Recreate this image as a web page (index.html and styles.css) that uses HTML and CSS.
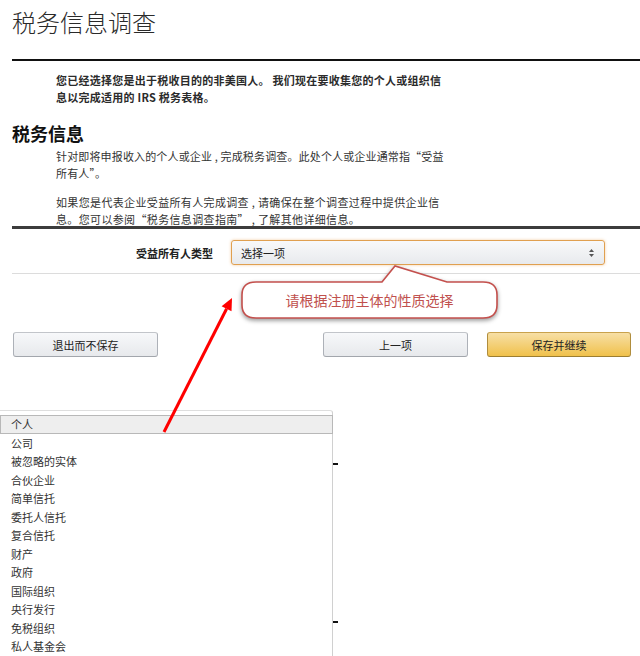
FILE: index.html
```html
<!DOCTYPE html>
<html lang="zh-CN">
<head>
<meta charset="utf-8">
<title>税务信息调查</title>
<link rel="stylesheet" href="styles.css">
</head>
<body>
<div class="page">
  <h1 class="title">税务信息调查</h1>
  <div class="rule-dark"></div>
  <p class="intro">您已经选择您是出于税收目的的非美国人。 我们现在要收集您的个人或组织信<br>息以完成适用的 IRS 税务表格。</p>
  <h2 class="section">税务信息</h2>
  <p class="text">针对即将申报收入的个人或企业 , 完成税务调查。此处个人或企业通常指“受益<br>所有人”。</p>
  <p class="text last">如果您是代表企业受益所有人完成调查 , 请确保在整个调查过程中提供企业信<br>息。您可以参阅“税务信息调查指南” , 了解其他详细信息。</p>
  <div class="rule-thick"></div>
  <div class="form-row">
    <label class="label">受益所有人类型</label>
    <div class="select">
      <span>选择一项</span>
      <svg class="updown" width="5" height="8" viewBox="0 0 5 8"><polygon points="0,3 2.5,0 5,3" fill="#555"/><polygon points="0,5 2.5,8 5,5" fill="#555"/></svg>
    </div>
  </div>
  <div class="rule-light"></div>
  <div class="buttons">
    <button class="btn">退出而不保存</button>
    <div class="btn-group">
      <button class="btn">上一项</button>
      <button class="btn primary">保存并继续</button>
    </div>
  </div>
</div>

<svg class="annot" width="640" height="656" viewBox="0 0 640 656">
  <path class="callout-shape" d="M256 282 L382 282 L395 266 L447 282 L483 282 Q497 282 497 295 L497 305 Q497 318 483 318 L256 318 Q242 318 242 305 L242 295 Q242 282 256 282 Z" fill="#fff" stroke="#c4504d" stroke-width="1.6"/>
</svg>
<div class="callout-text">请根据注册主体的性质选择</div>

<div class="dropdown">
  <div class="item active">个人</div>
  <div class="item">公司</div>
  <div class="item">被忽略的实体</div>
  <div class="item">合伙企业</div>
  <div class="item">简单信托</div>
  <div class="item">委托人信托</div>
  <div class="item">复合信托</div>
  <div class="item">财产</div>
  <div class="item">政府</div>
  <div class="item">国际组织</div>
  <div class="item">央行发行</div>
  <div class="item">免税组织</div>
  <div class="item">私人基金会</div>
</div>
<span class="mark m1"></span>
<span class="mark m2"></span>

<svg class="arrow" width="640" height="656" viewBox="0 0 640 656">
  <line x1="164" y1="432" x2="226.6" y2="308.7" stroke="#ff0000" stroke-width="3"/>
  <polygon points="232,298 231.5,311.2 221.6,306.2" fill="#ff0000"/>
</svg>
</body>
</html>
```
FILE: styles.css
```css
html, body {
  margin: 0;
  padding: 0;
  background: #fff;
}
body {
  font-family: "Noto Sans CJK SC", "Noto Sans", "Liberation Sans", sans-serif;
  color: #222;
  width: 640px;
  height: 656px;
  overflow: hidden;
  position: relative;
}
.page {
  padding-left: 12px;
}
.title {
  margin: 0;
  padding-top: 7px;
  font-size: 24px;
  line-height: 30px;
  font-weight: 300;
  color: #2a2a2a;
}
.rule-dark {
  margin-top: 22px;
  height: 2px;
  background: #111;
}
.intro {
  margin: 10.5px 0 0 44px;
  font-size: 11px;
  line-height: 17px;
  font-weight: 700;
  color: #2b2b2b;
  letter-spacing: 0.25px;
}
.section {
  margin: 16.5px 0 0 0;
  font-size: 18px;
  line-height: 22px;
  font-weight: 700;
  color: #111;
}
.text {
  margin: 3.5px 0 0 44px;
  font-size: 11px;
  line-height: 17px;
  color: #333;
  letter-spacing: 0.15px;
}
.text.last {
  margin-top: 12px;
  letter-spacing: 0.35px;
}
.rule-thick {
  margin-top: -2px;
  height: 3px;
  background: #3c3c3c;
}
.form-row {
  margin-top: 11.5px;
  display: grid;
  grid-template-columns: 201px 374px;
  column-gap: 18px;
  align-items: center;
}
.label {
  text-align: right;
  font-size: 11px;
  font-weight: 700;
  color: #222;
}
.select {
  box-sizing: border-box;
  height: 25px;
  border: 1px solid #e0a050;
  border-radius: 3px;
  background: linear-gradient(#f8f9fa, #e8eaed);
  box-shadow: 0 0 3px rgba(228, 140, 40, 0.45);
  display: flex;
  align-items: center;
  justify-content: space-between;
  padding: 0 10px 0 9px;
  font-size: 11px;
  color: #222;
}
.updown {
  display: block;
}
.rule-light {
  margin-top: 8px;
  height: 1px;
  background: #dcdcdc;
}
.buttons {
  margin-top: 58px;
  padding: 0 9px 0 1px;
  display: flex;
  justify-content: space-between;
  align-items: center;
}
.btn-group {
  display: flex;
  gap: 19px;
}
.btn {
  box-sizing: border-box;
  width: 145px;
  height: 25px;
  border: 1px solid #adb1b8;
  border-color: #c2c5ca #adb1b8 #a2a6ac;
  border-radius: 3px;
  background: linear-gradient(#f7f8fa, #e7e9ec);
  font-family: inherit;
  font-size: 11px;
  color: #222;
  padding: 0;
}
.btn.primary {
  width: 144px;
  background: linear-gradient(#f7dfa5, #f0c14b);
  border-color: #c9a24c #b08d3d #9c7e31;
}
.annot {
  position: absolute;
  left: 0;
  top: 0;
  pointer-events: none;
  filter: drop-shadow(0 2px 2px rgba(0, 0, 0, 0.4));
}
.callout-text {
  position: absolute;
  left: 242px;
  top: 282px;
  width: 255px;
  height: 36px;
  line-height: 36px;
  text-align: center;
  font-size: 14px;
  color: #c0504d;
}
.arrow {
  position: absolute;
  left: 0;
  top: 0;
  pointer-events: none;
}
.dropdown {
  position: absolute;
  left: 0;
  top: 410px;
  width: 333px;
  height: 260px;
  box-sizing: border-box;
  background: #fff;
  border-top: 1px solid #dedede;
  border-right: 1px solid #d0d0d0;
  border-top-right-radius: 3px;
  padding-top: 4px;
}
.item {
  height: 18.5px;
  line-height: 18.5px;
  padding-left: 11px;
  font-size: 11px;
  color: #333;
}
.item.active {
  box-sizing: border-box;
  background: #eeeeee;
  border: 1px solid #b8b8b8;
  line-height: 16.5px;
  margin-right: -1px;
  padding-left: 10px;
}
.mark {
  position: absolute;
  left: 333px;
  width: 5px;
  height: 2px;
  background: #111;
}
.m1 { top: 463px; }
.m2 { top: 621px; }
```
